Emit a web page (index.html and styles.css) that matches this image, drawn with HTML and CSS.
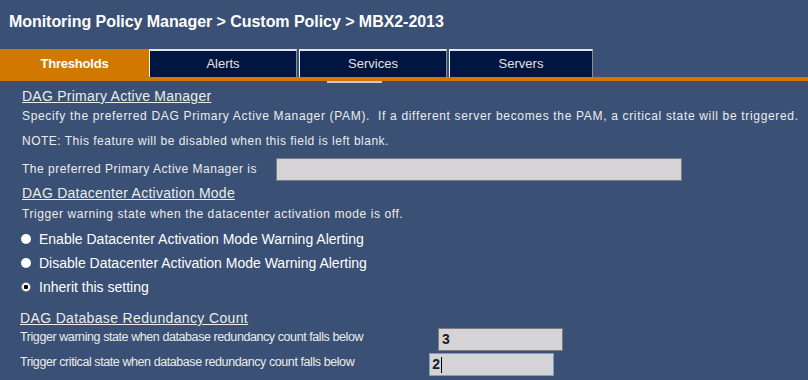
FILE: index.html
```html
<!DOCTYPE html>
<html>
<head>
<meta charset="utf-8">
<link rel="stylesheet" href="styles.css">
</head>
<body>
<div class="title">Monitoring Policy Manager &gt; Custom Policy &gt; MBX2-2013</div>
<div class="tabbar">
  <div class="tab active">Thresholds</div>
  <div class="tab">Alerts</div>
  <div class="tab">Services</div>
  <div class="tab last">Servers</div>
  <div class="strip"></div>
</div>
<div class="content">
  <div class="heading h1">DAG Primary Active Manager</div>
  <div class="line spec">Specify the preferred DAG Primary Active Manager (PAM).&nbsp; If a different server becomes the PAM, a critical state will be triggered.</div>
  <div class="line note">NOTE: This feature will be disabled when this field is left blank.</div>
  <div class="row pref">
    <span class="line">The preferred Primary Active Manager is</span>
    <div class="field wide"></div>
  </div>
  <div class="heading h2">DAG Datacenter Activation Mode</div>
  <div class="line trig">Trigger warning state when the datacenter activation mode is off.</div>
  <div class="radios">
    <div class="radio"><span class="dot"></span><span>Enable Datacenter Activation Mode Warning Alerting</span></div>
    <div class="radio"><span class="dot"></span><span>Disable Datacenter Activation Mode Warning Alerting</span></div>
    <div class="radio"><span class="dot checked"></span><span>Inherit this setting</span></div>
  </div>
  <div class="sec3">
    <div class="heading h3">DAG Database Redundancy Count</div>
    <div class="row cnt">
      <span class="cond">Trigger warning state when database redundancy count falls below</span>
      <div class="field small">3</div>
    </div>
    <div class="row cnt">
      <span class="cond">Trigger critical state when database redundancy count falls below</span>
      <div class="field small focus">2<span class="caret"></span></div>
    </div>
  </div>
</div>
</body>
</html>
```
FILE: styles.css
```css
html, body {
  margin: 0;
  padding: 0;
}
body {
  background: #3a5074;
  width: 808px;
  height: 380px;
  overflow: hidden;
  font-family: "Liberation Sans", Arial, sans-serif;
  color: #ebebeb;
}
.title {
  height: 49px;
  box-sizing: border-box;
  padding: 12px 0 0 9px;
  font-size: 16px;
  line-height: 19px;
  font-weight: bold;
  letter-spacing: -0.05px;
  color: #ffffff;
}
.tabbar {
  position: relative;
  display: flex;
  gap: 2px;
  height: 28px;
  border-bottom: 4px solid #d27700;
}
.tab {
  width: 148px;
  box-sizing: border-box;
  height: 28px;
  background: #00153f;
  border-top: 2px solid #e4e4e4;
  border-left: 1px solid #f2f2f2;
  border-right: 1px solid #8c8c8c;
  text-align: center;
  font-size: 13px;
  line-height: 26px;
  color: #e2e2e2;
}
.tab.active {
  width: 149px;
  margin-right: -2px;
  background: #d27700;
  border: none;
  line-height: 30px;
  font-weight: bold;
  letter-spacing: -0.2px;
  color: #ffffff;
}
.tab.last {
  width: 144px;
}
.strip {
  position: absolute;
  left: 327px;
  top: 32px;
  width: 55px;
  height: 2px;
  background: #c9c9c9;
}
.content {
  padding: 5px 0 0 22px;
}
.heading {
  font-size: 14px;
  line-height: 20px;
  letter-spacing: 0.25px;
  text-decoration: underline;
  color: #ececec;
}
.line {
  font-size: 12px;
  letter-spacing: 0.5px;
  color: #ececec;
}
.spec {
  line-height: 20px;
  letter-spacing: 0.67px;
}
.note {
  line-height: 31px;
}
.row {
  display: flex;
  align-items: center;
}
.pref {
  height: 24px;
  gap: 19px;
}
.field {
  box-sizing: border-box;
  background: #d5d3d6;
  border: 1px solid #7c7c7c;
  height: 23px;
}
.wide {
  width: 406px;
}
.h2 {
  margin-top: 1px;
  line-height: 22px;
}
.trig {
  line-height: 21px;
  letter-spacing: 0.58px;
}
.radios {
  margin-top: 2px;
}
.radio {
  display: flex;
  align-items: center;
  height: 24px;
  font-size: 14px;
  color: #ffffff;
  gap: 8px;
}
.dot {
  width: 10px;
  height: 10px;
  margin-left: -1px;
  border-radius: 50%;
  background: #ffffff;
  box-sizing: border-box;
}
.dot.checked {
  border: 1px solid #8a8a8a;
  background: radial-gradient(circle, #000000 0 2px, #ffffff 2.5px);
}
.sec3 {
  margin-left: -2px;
  margin-top: 9px;
}
.h3 {
  letter-spacing: 0.35px;
}
.cnt {
  align-items: flex-start;
  gap: 75px;
  margin-bottom: 2px;
}
.cond {
  font-size: 12.5px;
  line-height: 18px;
  letter-spacing: -0.42px;
  color: #ececec;
}
.small {
  width: 125px;
  font-size: 14px;
  font-weight: bold;
  line-height: 21px;
  padding-left: 3px;
  color: #1a1a2a;
}
.focus {
  border-color: #7f9fc0;
  padding-left: 2px;
  display: flex;
  align-items: center;
}
.caret {
  display: inline-block;
  width: 1px;
  height: 16px;
  background: #000000;
  margin-left: 1px;
}
```
